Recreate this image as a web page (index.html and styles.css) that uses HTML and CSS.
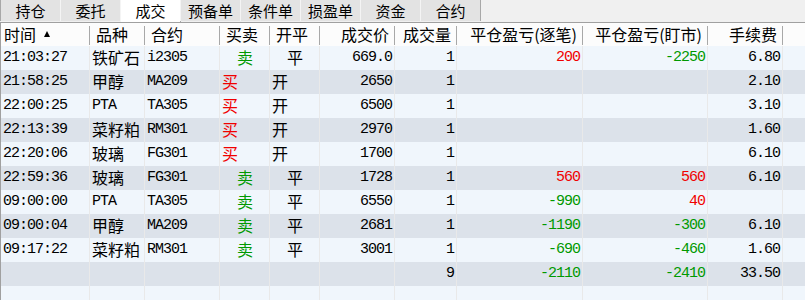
FILE: index.html
```html
<!DOCTYPE html>
<html lang="zh-CN">
<head>
    <meta charset="UTF-8">
    <title>成交</title>
    <link rel="stylesheet" href="styles.css">
</head>
<body>
    <div class="tabs">
        <div class="tab">持仓</div>
        <div class="tab">委托</div>
        <div class="tab active">成交</div>
        <div class="tab">预备单</div>
        <div class="tab">条件单</div>
        <div class="tab">损盈单</div>
        <div class="tab">资金</div>
        <div class="tab">合约</div>
    </div>

    <div class="grid">
        <div class="row head">
            <div class="c first">时间<span class="sort"></span></div>
            <div class="c">品种</div>
            <div class="c">合约</div>
            <div class="c">买卖</div>
            <div class="c">开平</div>
            <div class="c r">成交价</div>
            <div class="c r">成交量</div>
            <div class="c r">平仓盈亏(逐笔)</div>
            <div class="c r">平仓盈亏(盯市)</div>
            <div class="c r">手续费</div>
            <div class="c last"></div>
        </div>

        <div class="row">
            <div class="c m">21:03:27</div><div class="c">铁矿石</div><div class="c m">i2305</div>
            <div class="c sell">卖</div><div class="c ind">平</div>
            <div class="c m r">669.0</div><div class="c m r">1</div>
            <div class="c m r red">200</div><div class="c m r green">-2250</div><div class="c m r">6.80</div><div class="c last"></div>
        </div>
        <div class="row">
            <div class="c m">21:58:25</div><div class="c">甲醇</div><div class="c m">MA209</div>
            <div class="c buy">买</div><div class="c">开</div>
            <div class="c m r">2650</div><div class="c m r">1</div>
            <div class="c m r"></div><div class="c m r"></div><div class="c m r">2.10</div><div class="c last"></div>
        </div>
        <div class="row">
            <div class="c m">22:00:25</div><div class="c m">PTA</div><div class="c m">TA305</div>
            <div class="c buy">买</div><div class="c">开</div>
            <div class="c m r">6500</div><div class="c m r">1</div>
            <div class="c m r"></div><div class="c m r"></div><div class="c m r">3.10</div><div class="c last"></div>
        </div>
        <div class="row">
            <div class="c m">22:13:39</div><div class="c">菜籽粕</div><div class="c m">RM301</div>
            <div class="c buy">买</div><div class="c">开</div>
            <div class="c m r">2970</div><div class="c m r">1</div>
            <div class="c m r"></div><div class="c m r"></div><div class="c m r">1.60</div><div class="c last"></div>
        </div>
        <div class="row">
            <div class="c m">22:20:06</div><div class="c">玻璃</div><div class="c m">FG301</div>
            <div class="c buy">买</div><div class="c">开</div>
            <div class="c m r">1700</div><div class="c m r">1</div>
            <div class="c m r"></div><div class="c m r"></div><div class="c m r">6.10</div><div class="c last"></div>
        </div>
        <div class="row">
            <div class="c m">22:59:36</div><div class="c">玻璃</div><div class="c m">FG301</div>
            <div class="c sell">卖</div><div class="c ind">平</div>
            <div class="c m r">1728</div><div class="c m r">1</div>
            <div class="c m r red">560</div><div class="c m r red">560</div><div class="c m r">6.10</div><div class="c last"></div>
        </div>
        <div class="row">
            <div class="c m">09:00:00</div><div class="c m">PTA</div><div class="c m">TA305</div>
            <div class="c sell">卖</div><div class="c ind">平</div>
            <div class="c m r">6550</div><div class="c m r">1</div>
            <div class="c m r green">-990</div><div class="c m r red">40</div><div class="c m r"></div><div class="c last"></div>
        </div>
        <div class="row">
            <div class="c m">09:00:04</div><div class="c">甲醇</div><div class="c m">MA209</div>
            <div class="c sell">卖</div><div class="c ind">平</div>
            <div class="c m r">2681</div><div class="c m r">1</div>
            <div class="c m r green">-1190</div><div class="c m r green">-300</div><div class="c m r">6.10</div><div class="c last"></div>
        </div>
        <div class="row">
            <div class="c m">09:17:22</div><div class="c">菜籽粕</div><div class="c m">RM301</div>
            <div class="c sell">卖</div><div class="c ind">平</div>
            <div class="c m r">3001</div><div class="c m r">1</div>
            <div class="c m r green">-690</div><div class="c m r green">-460</div><div class="c m r">1.60</div><div class="c last"></div>
        </div>
        <div class="row">
            <div class="c"></div><div class="c"></div><div class="c"></div>
            <div class="c"></div><div class="c"></div>
            <div class="c"></div><div class="c m r">9</div>
            <div class="c m r green">-2110</div><div class="c m r green">-2410</div><div class="c m r">33.50</div><div class="c last"></div>
        </div>
        <div class="row">
            <div class="c"></div><div class="c"></div><div class="c"></div>
            <div class="c"></div><div class="c"></div>
            <div class="c"></div><div class="c"></div>
            <div class="c"></div><div class="c"></div><div class="c"></div><div class="c last"></div>
        </div>
    </div>
</body>
</html>
```

FILE: styles.css
```css
body {
    margin: 0;
    background-color: #f0f0f0;
    font-family: "Noto Sans CJK SC", "Liberation Sans", sans-serif;
    font-size: 16px;
    color: #000;
    overflow: hidden;
    height: 300px;
}
.tabs {
    display: flex;
    height: 22px;
    padding-left: 1px;
}
.tab {
    width: 59px;
    height: 21px;
    line-height: 22px;
    font-size: 15px;
    text-align: center;
    background-color: #e3e3e3;
    border-right: 1px solid #a8a8a8;
    border-left: 1px solid #f4f4f4;
    margin-left: -1px;
}
.tab:first-child {
    border-left: 1px solid #a8a8a8;
}
.tab.active {
    background-color: #fff;
    height: 22px;
}
.grid {
    border-top: 1px solid #a0a0a0;
    border-left: 1px solid #a0a0a0;
}
.row {
    display: grid;
    grid-template-columns: 89px 55px 75px 50px 50px 75px 62px 126px 125px 75px 1fr;
    height: 24px;
    background-color: #f0f6fc;
}
.row:nth-child(odd) {
    background-color: #dce2ea;
}
.row.head {
    height: 23px;
    background-color: #fcfcfc;
}
.c {
    box-sizing: border-box;
    border-right: 1px solid #e9e9e9;
    padding: 0 2px;
    line-height: 23px;
    white-space: nowrap;
    overflow: hidden;
}
.c.last {
    border-right: 0;
}
.head .c {
    border-right: 0;
    padding: 0 6px;
    line-height: 23px;
    overflow: visible;
    background: linear-gradient(#a8a8a8, #a8a8a8) right 3px / 1px 19px no-repeat;
}
.head .c.first {
    padding-left: 3px;
}
.head .c.last {
    background: none;
}
.r {
    text-align: right;
}
.m {
    font-family: "Liberation Mono", monospace;
    font-size: 15px;
    letter-spacing: -1px;
}
.sort {
    display: inline-block;
    margin-left: 8px;
    vertical-align: 4px;
    border-left: 3.5px solid transparent;
    border-right: 3.5px solid transparent;
    border-bottom: 6px solid #000;
}
.buy {
    color: #f00000;
}
.sell {
    color: #009900;
    padding-left: 17px;
}
.ind {
    padding-left: 17px;
}
.red {
    color: #f00000;
}
.green {
    color: #009900;
}
```
